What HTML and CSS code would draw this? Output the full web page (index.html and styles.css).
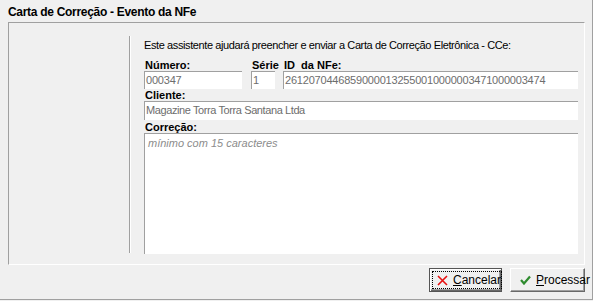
FILE: index.html
```html
<!DOCTYPE html>
<html lang="pt-BR">
<head>
  <meta charset="UTF-8" />
  <title>Carta de Correção - Evento da NFe</title>
  <link rel="stylesheet" href="styles.css">
</head>
<body>

  <div class="dialog">
    <div class="title">Carta de Correção - Evento da NFe</div>

    <div class="frame">
      <div class="side"></div>

      <div class="content">
        <p class="intro">Este assistente ajudará preencher e enviar a Carta de Correção Eletrônica - CCe:</p>

        <div class="grid">
          <label class="lbl">Número:</label>
          <label class="lbl">Série</label>
          <label class="lbl">ID&nbsp; da NFe:</label>
          <div class="field">000347</div>
          <div class="field">1</div>
          <div class="field">26120704468590000132550010000003471000003474</div>
        </div>

        <label class="lbl">Cliente:</label>
        <div class="field wide">Magazine Torra Torra Santana Ltda</div>

        <label class="lbl">Correção:</label>
        <div class="memo"><span class="placeholder">mínimo com 15 caracteres</span></div>
      </div>
    </div>

    <div class="buttons">
      <button class="btn default">
        <span class="focus">
          <svg width="11" height="11" viewBox="0 0 11 11"><path d="M1 1 L10 10 M10 1 L1 10" stroke="#e81010" stroke-width="1.6" fill="none"/></svg>
          <span><u>C</u>ancelar</span>
        </span>
      </button>
      <button class="btn">
        <span class="focus plain">
          <svg width="11" height="10" viewBox="0 0 11 10"><path d="M1 5 L4 8.5 L10 1.5" stroke="#2e8b2e" stroke-width="2.2" fill="none"/></svg>
          <span><u>P</u>rocessar</span>
        </span>
      </button>
    </div>
  </div>

</body>
</html>
```

FILE: styles.css
```css
* {
  box-sizing: border-box;
}

body {
  margin: 0;
  background: #f0f0f0;
  font-family: 'Liberation Sans', Arial, sans-serif;
  font-size: 11px;
  color: #000;
}

.dialog {
  width: 593px;
  height: 300px;
  border-right: 1px solid #a0a0a0;
  border-bottom: 1px solid #a0a0a0;
  display: flex;
  flex-direction: column;
}

.title {
  height: 22px;
  padding: 5px 0 0 8px;
  font-size: 12px;
  font-weight: bold;
  letter-spacing: -0.3px;
  line-height: 14px;
}

.frame {
  margin-left: 8px;
  width: 577px;
  height: 243px;
  border-top: 1px solid #a0a0a0;
  border-left: 1px solid #a0a0a0;
  border-right: 1px solid #fff;
  border-bottom: 1px solid #fff;
  display: flex;
  padding: 13px 6px 10px 0;
}

.side {
  width: 121px;
  margin-bottom: 1px;
  border-right: 1px solid #a0a0a0;
  box-shadow: 1px 0 0 #fff;
}

.content {
  margin-left: 14px;
  flex-grow: 1;
  display: flex;
  flex-direction: column;
}

.intro {
  margin: 3px 0 8px 0;
  line-height: 12px;
  letter-spacing: -0.4px;
}

.grid {
  display: grid;
  grid-template-columns: 99px 24px 1fr;
  column-gap: 8px;
}

.grid .field:first-of-type {
  margin-right: 1px;
}

.lbl {
  display: block;
  font-weight: bold;
  line-height: 12px;
  height: 12px;
  padding-left: 1px;
  white-space: nowrap;
}

.field {
  height: 18px;
  background: #fff;
  border-top: 1px solid #a0a0a0;
  border-left: 1px solid #a0a0a0;
  color: #6d6d6d;
  line-height: 16px;
  padding-left: 1px;
  letter-spacing: -0.2px;
  white-space: nowrap;
  overflow: hidden;
}

.field.wide {
  height: 19px;
  margin-bottom: 1px;
  letter-spacing: -0.4px;
}

.memo {
  flex-grow: 1;
  background: #fff;
  border-top: 1px solid #a0a0a0;
  border-left: 1px solid #a0a0a0;
  padding: 3px 3px;
}

.placeholder {
  color: #8c8c8c;
  font-style: italic;
  font-size: 11px;
}

.buttons {
  margin-top: 3px;
  padding-right: 7px;
  display: flex;
  justify-content: flex-end;
  gap: 8px;
}

.btn {
  width: 75px;
  height: 24px;
  padding: 0;
  background: #f0f0f0;
  font-family: 'Liberation Sans', Arial, sans-serif;
  font-size: 12px;
  color: #000;
  border: 1px solid;
  border-color: #fff #696969 #696969 #fff;
  box-shadow: inset -1px -1px 0 #a0a0a0;
  display: flex;
  align-items: stretch;
}

.btn.default {
  width: 73px;
  border: 1px solid #555;
  box-shadow: inset 1px 1px 0 #fff, inset -1px -1px 0 #696969, inset -2px -2px 0 #a0a0a0;
}

.focus {
  flex-grow: 1;
  margin: 3px;
  display: flex;
  align-items: center;
  gap: 5px;
  padding-left: 4px;
  outline: 1px dotted #000;
}

.focus.plain {
  outline: none;
  padding-left: 6px;
}
```
